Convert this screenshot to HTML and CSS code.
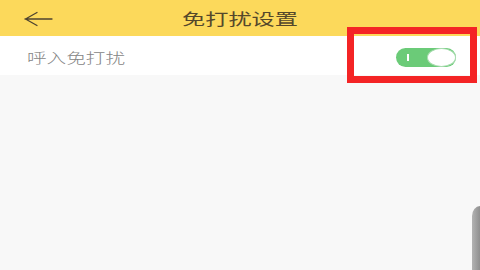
FILE: index.html
```html
<!DOCTYPE html>
<html lang="zh">
<head>
<meta charset="utf-8">
<link rel="stylesheet" href="styles.css">
</head>
<body>
<div class="screen">
  <header class="topbar">
    <svg class="back" width="30" height="16" viewBox="0 0 30 16">
      <path d="M1 8 H28 M13 1.5 L1.5 8 L13 14.5" fill="none" stroke="#4d4330" stroke-width="1.3" stroke-linecap="round" stroke-linejoin="round"/>
    </svg>
    <h1 class="title"><span class="title-text">免打扰设置</span></h1>
  </header>
  <div class="row">
    <span class="label">呼入免打扰</span>
    <div class="toggle">
      <span class="mark"></span>
      <span class="knob"></span>
    </div>
  </div>
  <div class="highlight"></div>
  <div class="scrollbar"></div>
</div>
</body>
</html>
```
FILE: styles.css
```css
* { box-sizing: border-box; }
html, body { margin: 0; padding: 0; }
body {
  width: 480px;
  height: 270px;
  overflow: hidden;
  background: #f8f8f8;
  font-family: "Noto Sans CJK SC", "Noto Sans", sans-serif;
}
.screen {
  position: relative;
  width: 480px;
  height: 270px;
  overflow: hidden;
}
.topbar {
  height: 36px;
  background: #fcd95b;
  display: flex;
  align-items: center;
  position: relative;
  padding-left: 24px;
}
.back { display: block; margin-top: 1px; }
.title {
  position: absolute;
  left: 0;
  right: 0;
  top: 0;
  margin: 0;
  text-align: center;
  line-height: 36px;
  font-size: 16px;
  font-weight: 400;
  color: #55482b;
  pointer-events: none;
}
.title-text {
  display: inline-block;
  transform: scaleX(1.45);
}
.row {
  height: 39px;
  background: #ffffff;
  display: flex;
  align-items: center;
  justify-content: space-between;
  padding-left: 27px;
  padding-right: 24px;
}
.label {
  font-size: 14px;
  font-weight: 300;
  color: #858585;
  transform: scaleX(1.4);
  transform-origin: left center;
  margin-top: 2px;
}
.toggle {
  position: relative;
  width: 60px;
  height: 19px;
  border-radius: 10px;
  background: #6bcb78;
  margin-top: 3px;
}
.mark {
  position: absolute;
  left: 11px;
  top: 6px;
  width: 1.5px;
  height: 7px;
  background: #ffffff;
}
.knob {
  position: absolute;
  right: 0;
  top: 0;
  width: 29px;
  height: 19px;
  border-radius: 50%;
  background: #ffffff;
  border: 1px solid #a9dcb0;
}
.highlight {
  position: absolute;
  left: 347px;
  top: 27px;
  width: 130px;
  height: 56px;
  border: 7px solid #f42425;
}
.scrollbar {
  position: absolute;
  left: 472px;
  top: 206px;
  width: 8px;
  height: 64px;
  background: linear-gradient(90deg, #b3b3b3, #8f8f8f);
  border-top-left-radius: 8px 10px;
}
```
